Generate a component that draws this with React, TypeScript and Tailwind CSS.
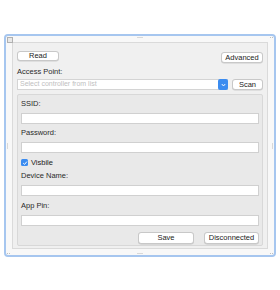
import React from "react";

const font = { fontFamily: '"Liberation Sans", Arial, sans-serif' };

function Btn({ children, className = "" }: { children: React.ReactNode; className?: string }) {
  return (
    <div
      className={
        "flex items-center justify-center bg-white border border-[#c8c8c8] rounded-[3px] text-[7.5px] text-[#222] shadow-[0_0.5px_0.5px_rgba(0,0,0,0.15)] " +
        className
      }
    >
      {children}
    </div>
  );
}

function Input() {
  return <div className="h-[11px] bg-white border border-[#d0d0d0]" />;
}

function Label({ children, className = "" }: { children: React.ReactNode; className?: string }) {
  return <div className={"text-[7.5px] text-[#2a2a2a] leading-[9px] " + className}>{children}</div>;
}

function Dots({ vertical = false }: { vertical?: boolean }) {
  return (
    <div className={"flex gap-[1px] " + (vertical ? "flex-col" : "flex-row")}>
      <div className="w-[1px] h-[1px] bg-[#b8b8b8]" />
      <div className="w-[1px] h-[1px] bg-[#b8b8b8]" />
      <div className="w-[1px] h-[1px] bg-[#b8b8b8]" />
    </div>
  );
}

export default function App() {
  return (
    <div className="w-[280px] h-[290px] bg-white pt-[34px] pl-[4px]" style={font}>
      <div className="relative w-[272px] h-[223px] border-2 border-[#a6c6ef] rounded-[4px] bg-[#f8f8f8] p-[6px]">
        <div className="absolute left-[1px] top-[1px] w-[6px] h-[6px] border border-[#b0b0b0] bg-[#e8e8e8]" />
        <div className="absolute left-1/2 top-[1px] -translate-x-1/2">
          <Dots />
        </div>
        <div className="absolute left-1/2 bottom-[1px] -translate-x-1/2">
          <Dots />
        </div>
        <div className="absolute left-[1px] top-1/2 -translate-y-1/2">
          <Dots vertical />
        </div>
        <div className="absolute right-[1px] top-1/2 -translate-y-1/2">
          <Dots vertical />
        </div>
        <div className="absolute right-[1px] top-[1px] flex gap-[1px]">
          <div className="w-[1px] h-[1px] bg-[#c0c0c0]" />
          <div className="w-[1px] h-[1px] bg-[#c0c0c0]" />
        </div>
        <div className="absolute right-[1px] bottom-[1px] flex gap-[1px]">
          <div className="w-[1px] h-[1px] bg-[#c0c0c0]" />
          <div className="w-[1px] h-[1px] bg-[#c0c0c0]" />
        </div>
        <div className="absolute left-[1px] bottom-[1px] flex gap-[1px]">
          <div className="w-[1px] h-[1px] bg-[#c0c0c0]" />
          <div className="w-[1px] h-[1px] bg-[#c0c0c0]" />
        </div>

        <div className="w-full h-full border border-[#dadada] bg-[#f0f0f0] px-[4px] pt-[8px] flex flex-col">
          <div className="flex justify-between items-start">
            <Btn className="w-[42px] h-[10px]">Read</Btn>
            <Btn className="w-[42px] h-[11px] mt-[1px]">Advanced</Btn>
          </div>
          <Label className="mt-[4px]">Access Point:</Label>
          <div className="flex items-center mt-[3px] gap-[4px]">
            <div className="flex-1 h-[11px] bg-white border border-[#d4d4d4] flex items-center relative">
              <span className="pl-[2px] text-[7px] text-[#c0c0c0]">Select controller from list</span>
              <div className="absolute right-[-1px] top-[-1px] w-[10px] h-[11px] rounded-[2px] bg-[#3b8cf0] flex items-center justify-center">
                <svg width="5" height="4" viewBox="0 0 5 4">
                  <path d="M0.8 1 L2.5 3 L4.2 1" stroke="white" strokeWidth="0.9" fill="none" />
                </svg>
              </div>
            </div>
            <Btn className="w-[31px] h-[11px]">Scan</Btn>
          </div>
          <div className="mt-[4px] flex-1 mb-[2px] border border-[#d8d8d8] rounded-[2px] bg-[#e9e9e9] px-[3px] pt-[4px] flex flex-col">
            <Label>SSID:</Label>
            <div className="mt-[5px]"><Input /></div>
            <Label className="mt-[4px]">Password:</Label>
            <div className="mt-[5px]"><Input /></div>
            <div className="flex items-center gap-[3px] mt-[5px] h-[9px]">
              <div className="w-[7px] h-[7px] rounded-[1.5px] bg-[#3b8cf0] flex items-center justify-center">
                <svg width="6" height="6" viewBox="0 0 6 6">
                  <path d="M1.2 3.1 L2.5 4.4 L4.9 1.6" stroke="white" strokeWidth="1" fill="none" />
                </svg>
              </div>
              <span className="text-[7.5px] text-[#222] leading-[9px]">Visbile</span>
            </div>
            <Label className="mt-[4px]">Device Name:</Label>
            <div className="mt-[5px]"><Input /></div>
            <Label className="mt-[5px]">App Pin:</Label>
            <div className="mt-[5px]"><Input /></div>
            <div className="flex justify-end gap-[10px] mt-[6px]">
              <Btn className="w-[56px] h-[12px]">Save</Btn>
              <Btn className="w-[55px] h-[12px]">Disconnected</Btn>
            </div>
          </div>
        </div>
      </div>
    </div>
  );
}
